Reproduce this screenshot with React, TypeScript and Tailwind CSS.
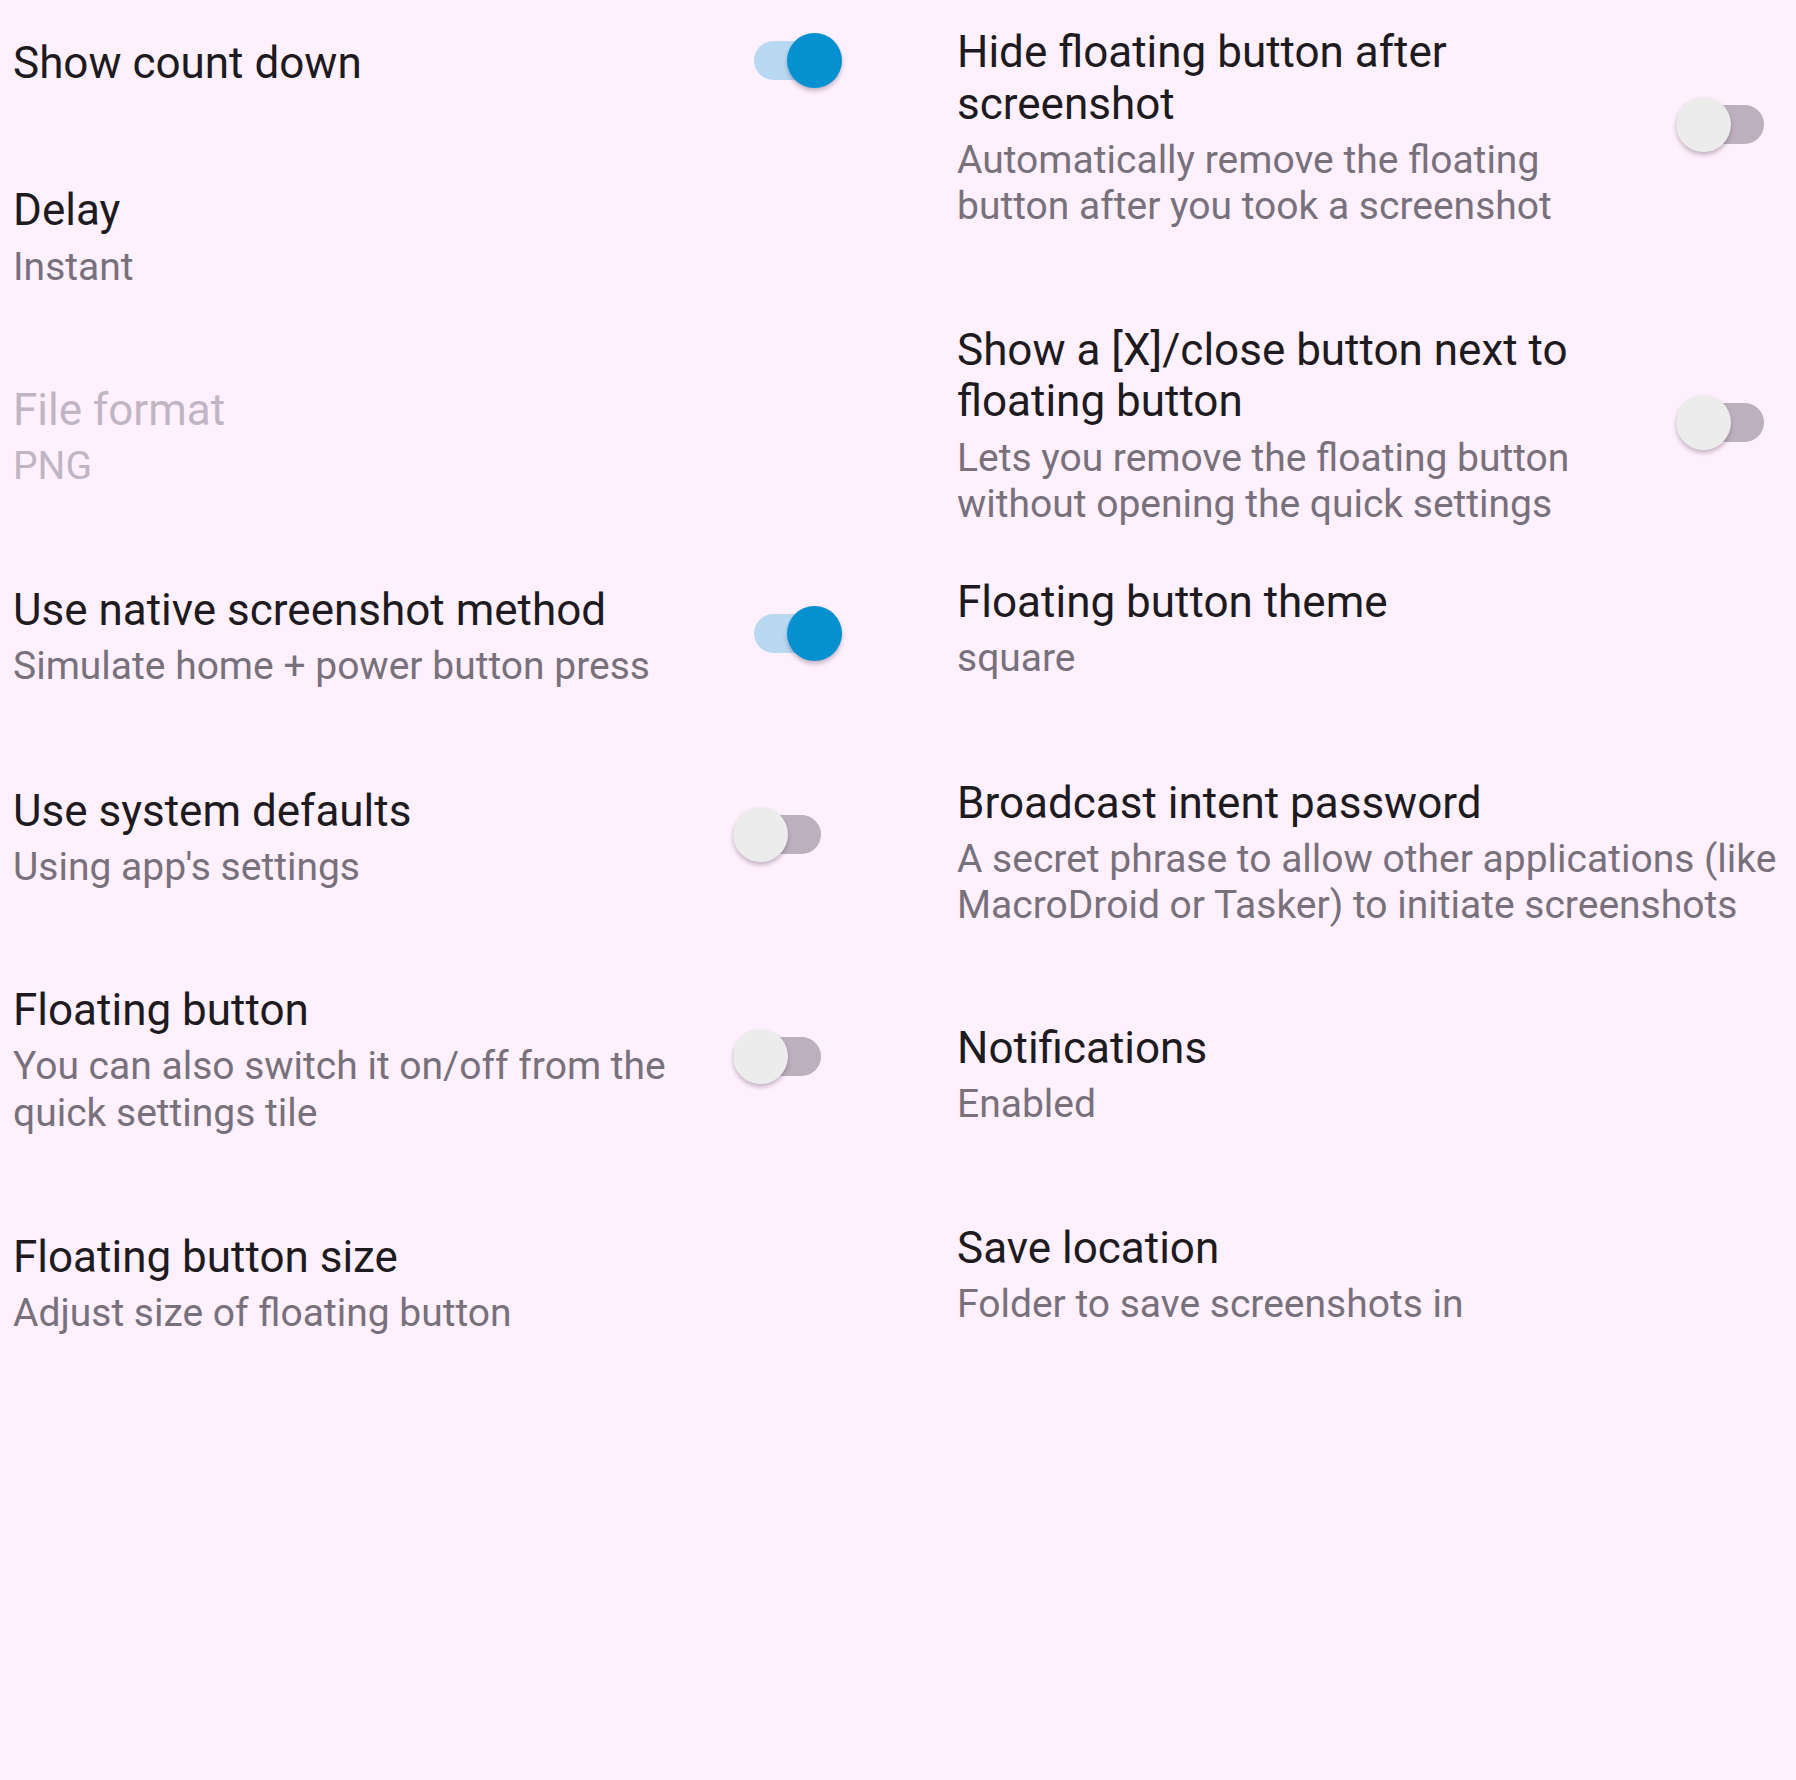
import React from 'react';

type SwitchState = 'on' | 'off' | undefined;

interface Pref {
  title: string;
  summary?: string;
  disabled?: boolean;
  toggle?: SwitchState;
  gapClass: string;
  textClass: string;
  switchClass?: string;
}

const leftPrefs: Pref[] = [
  { title: 'Show count down', toggle: 'on', gapClass: 'mt-[36px]', textClass: 'w-[690px]', switchClass: 'ml-[51px] -mt-[3px] mb-[3px]' },
  { title: 'Delay', summary: 'Instant', gapClass: 'mt-[94px]', textClass: 'w-[690px]' },
  { title: 'File format', summary: 'PNG', disabled: true, gapClass: 'mt-[95px]', textClass: 'w-[690px]' },
  { title: 'Use native screenshot method', summary: 'Simulate home + power button press', toggle: 'on', gapClass: 'mt-[95px]', textClass: 'w-[690px]', switchClass: 'ml-[51px] -mt-[4px] mb-[4px]' },
  { title: 'Use system defaults', summary: "Using app's settings", toggle: 'off', gapClass: 'mt-[96px]', textClass: 'w-[690px]', switchClass: 'ml-[30px] -mt-[4px] mb-[4px]' },
  { title: 'Floating button', summary: 'You can also switch it on/off from the quick settings tile', toggle: 'off', gapClass: 'mt-[94px]', textClass: 'w-[690px]', switchClass: 'ml-[30px] -mt-[4px] mb-[4px]' },
  { title: 'Floating button size', summary: 'Adjust size of floating button', gapClass: 'mt-[96px]', textClass: 'w-[690px]' },
];

const rightPrefs: Pref[] = [
  { title: 'Hide floating button after screenshot', summary: 'Automatically remove the floating button after you took a screenshot', toggle: 'off', gapClass: 'mt-[27px]', textClass: 'w-[684px]', switchClass: 'ml-[35px] -mt-[4px] mb-[4px]' },
  { title: 'Show a [X]/close button next to floating button', summary: 'Lets you remove the floating button without opening the quick settings', toggle: 'off', gapClass: 'mt-[95px]', textClass: 'w-[684px]', switchClass: 'ml-[35px] -mt-[4px] mb-[4px]' },
  { title: 'Floating button theme', summary: 'square', gapClass: 'mt-[49px]', textClass: 'w-[830px]' },
  { title: 'Broadcast intent password', summary: 'A secret phrase to allow other applications (like MacroDroid or Tasker) to initiate screenshots', gapClass: 'mt-[96px]', textClass: 'w-[830px]' },
  { title: 'Notifications', summary: 'Enabled', gapClass: 'mt-[94px]', textClass: 'w-[830px]' },
  { title: 'Save location', summary: 'Folder to save screenshots in', gapClass: 'mt-[95px]', textClass: 'w-[830px]' },
];

const Switch: React.FC<{ on: boolean }> = ({ on }) => (
  <div className="relative w-[88px] h-[55px] shrink-0">
    <div className={`absolute inset-x-0 top-[8px] h-[39px] rounded-full ${on ? 'bg-[#b9d8f2]' : 'bg-[#bdb0be]'}`} />
    <div
      className={`absolute top-0 w-[55px] h-[55px] rounded-full shadow-[0_3px_4px_rgba(60,30,60,0.28)] ${
        on ? 'right-0 bg-[#0590d0]' : 'left-0 bg-[#ececec]'
      }`}
    />
  </div>
);

const PrefRow: React.FC<{ pref: Pref }> = ({ pref }) => (
  <div className={`flex items-center ${pref.gapClass}`}>
    <div className={pref.textClass}>
      <p className={`text-[44px] leading-[51.5px] ${pref.disabled ? 'text-[#c0b5c2]' : 'text-[#1d1b20]'}`}>{pref.title}</p>
      {pref.summary && (
        <p className={`mt-[7px] text-[39px] leading-[46.4px] ${pref.disabled ? 'text-[#c0b5c2]' : 'text-[#78717c]'}`}>
          {pref.summary}
        </p>
      )}
    </div>
    {pref.toggle && (
      <div className={pref.switchClass}>
        <Switch on={pref.toggle === 'on'} />
      </div>
    )}
  </div>
);

export default function App() {
  return (
    <div className="w-[1796px] h-[1780px] overflow-hidden bg-[#fef0fd] flex font-['Roboto','Noto_Sans',sans-serif]">
      <div className="w-[898px] pl-[13px] flex flex-col">
        {leftPrefs.map(p => (
          <PrefRow key={p.title} pref={p} />
        ))}
      </div>
      <div className="flex-1 pl-[59px] flex flex-col">
        {rightPrefs.map(p => (
          <PrefRow key={p.title} pref={p} />
        ))}
      </div>
    </div>
  );
}
